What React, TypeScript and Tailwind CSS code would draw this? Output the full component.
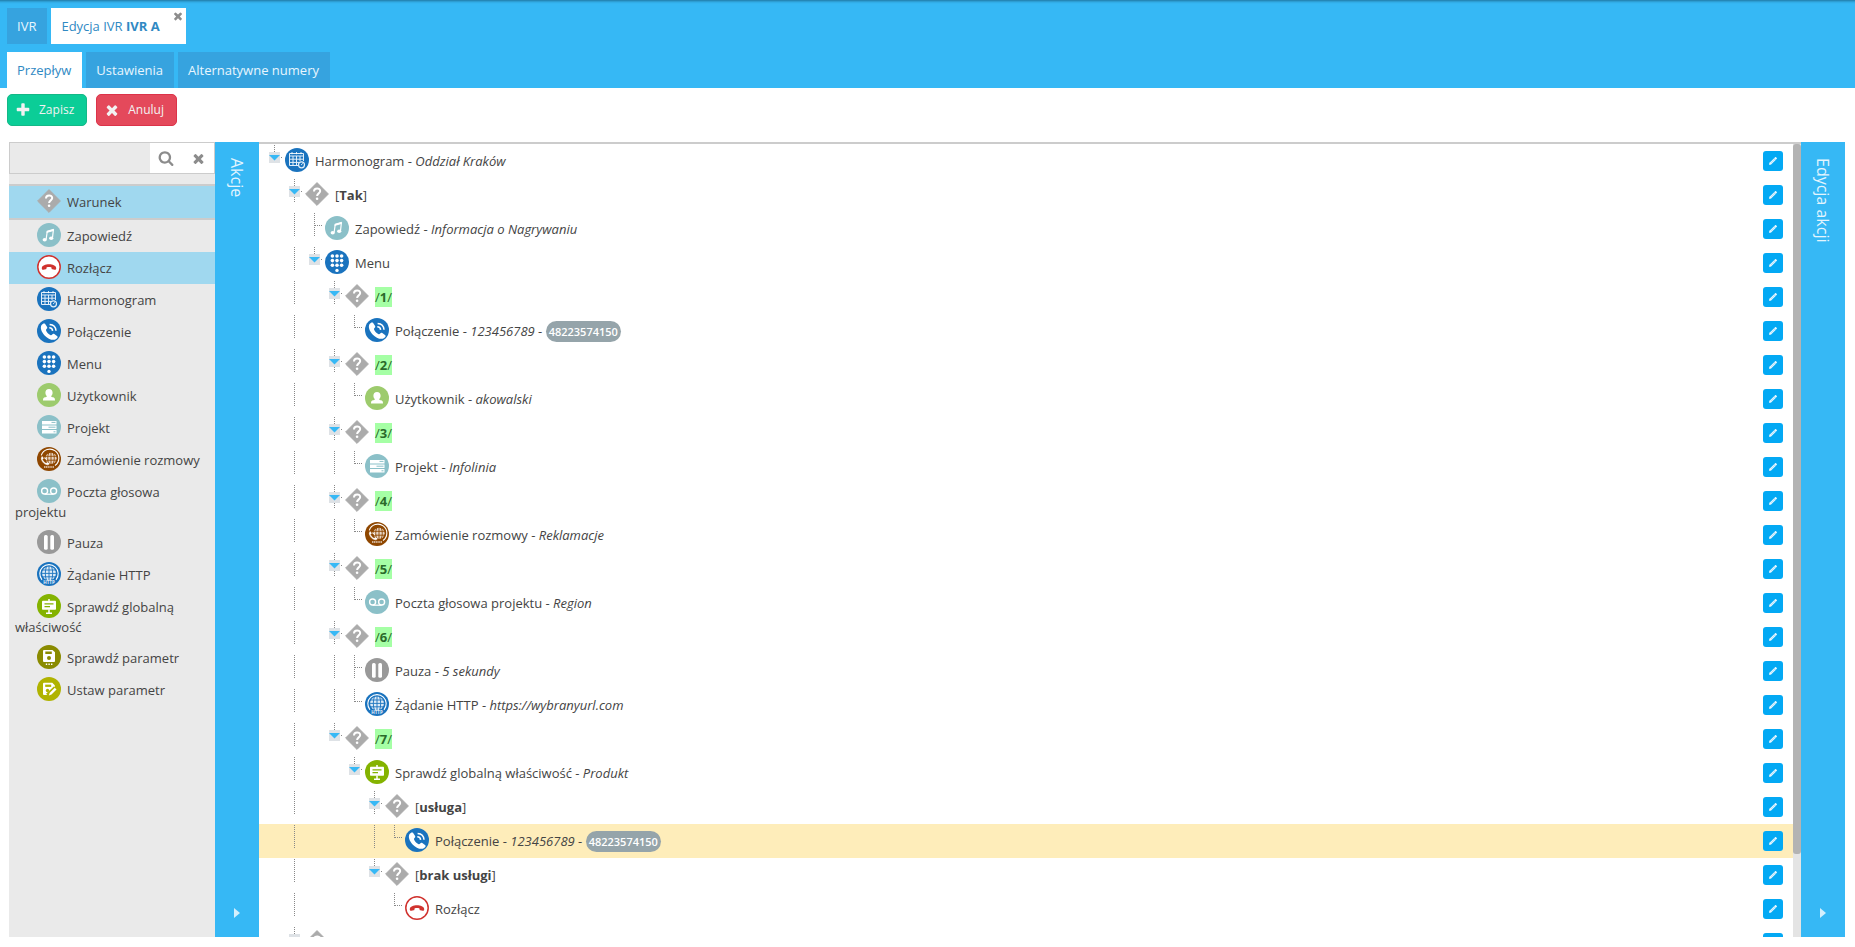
import type { ReactNode } from "react";

type IconName =
  | "condition"
  | "announcement"
  | "hangup"
  | "schedule"
  | "call"
  | "menu"
  | "user"
  | "project"
  | "callback"
  | "voicemail"
  | "pause"
  | "http"
  | "global"
  | "checkParam"
  | "setParam";

const DIAL_COLS = [7.4, 12, 16.6];
const DIAL_ROWS = [6, 10.6, 15.2];

const ICONS: Record<IconName, ReactNode> = {
  condition: (
    <>
      <path d="M12 .6 23.4 12 12 23.4.6 12z" fill="#ababab" stroke="#ababab" strokeLinejoin="round" />
      <path d="M9 9.4c0-4 6.2-3.8 6.2-.4 0 2.4-3.1 2.4-3.1 5" fill="none" stroke="#fff" strokeWidth="2" />
      <circle cx="12.1" cy="16.8" r="1.3" fill="#fff" />
    </>
  ),
  announcement: (
    <>
      <circle cx="12" cy="12" r="12" fill="#8bc0c8" />
      <path d="M9.1 16.5 10.2 8.6l6.2-1.7-.9 7.9" fill="none" stroke="#fff" strokeWidth="1.2" />
      <path d="m9.800 7.800 7-2-.3 2.300-7 2z" fill="#fff" />
      <ellipse cx="7.700" cy="16.700" rx="2.100" ry="1.800" fill="#fff" />
      <ellipse cx="14.200" cy="15.200" rx="2.100" ry="1.800" fill="#fff" />
    </>
  ),
  hangup: (
    <>
      <circle cx="12" cy="12" r="11.2" fill="#fff" stroke="#d0322e" strokeWidth="1.5" />
      <path d="M4.800 13c.5-5 13.900-5 14.400 0 .1 1.500-.5 1.900-1.700 1.700l-2-.4c-1-.2-1-.8-1-1.900-1.600-.6-3.400-.6-5 0 0 1.100 0 1.700-1 1.900l-2 .4c-1.200.2-1.800-.2-1.700-1.700z" fill="#d0322e" />
    </>
  ),
  schedule: (
    <>
      <circle cx="12" cy="12" r="12" fill="#1a73be" />
      <path d="M4.5 5.500h14V8h-14zM4.500 8v9.500H13M18.500 8v5M8 8v9.500M11.500 8v9.500M15 8v5M4.500 11.200h14M4.500 14.400H14" fill="none" stroke="#e3eff9" strokeWidth="1" />
      <path d="M7 4.200v2M11.500 4.200v2M16 4.200v2" stroke="#fff" strokeWidth="1" />
      <circle cx="16.500" cy="16.800" r="3" fill="#1a73be" stroke="#e3eff9" strokeWidth="1.200" />
      <path d="m16.200 16.900 1.500-1.400" stroke="#fff" strokeWidth="1" />
    </>
  ),
  call: (
    <>
      <circle cx="12" cy="12" r="12" fill="#1a73be" />
      <path d="M4.600 6c1-1.400 2.600-2.100 3.400-1.200l2.100 3.200c.5.900-.1 1.600-.8 2.300-.5.600-.3 1.100.1 1.900 1 1.700 2.200 2.900 3.800 3.700.8.400 1.300.4 1.800-.2.700-.8 1.500-1.300 2.300-.7l3 2.200c.9.800 0 2.200-1.500 3.100-2.900 1.500-7.800-.2-11.200-3.900S2.900 8.700 4.600 6z" fill="#fff" />
      <path d="M12.300 8.700c1.800 0 3.200 1.300 3.300 3.200M12.600 5.400c3.600.2 6.200 2.700 6.400 6.400" fill="none" stroke="#fff" strokeWidth="1.500" />
    </>
  ),
  menu: (
    <>
      <circle cx="12" cy="12" r="12" fill="#1a73be" />
      {DIAL_ROWS.map((y) => DIAL_COLS.map((x) => <circle key={`${x}-${y}`} cx={x} cy={y} r="1.800" fill="#fff" />))}
      <circle cx="12" cy="20.400" r="1.700" fill="#fff" />
    </>
  ),
  user: (
    <>
      <circle cx="12" cy="12" r="12" fill="#9dcb6d" />
      <path d="M12 6c2.300 0 3.600 1.600 3.600 3.700 0 1.500-.7 2.800-1.500 3.500.2.700 1.200.9 2.100 1.100 1.400.4 1.800 1.300 1.800 3.200H6c0-1.900.4-2.800 1.800-3.200.9-.2 1.900-.4 2.100-1.100-.8-.7-1.500-2-1.500-3.500C8.400 7.600 9.700 6 12 6z" fill="#fff" />
    </>
  ),
  project: (
    <>
      <circle cx="12" cy="12" r="12" fill="#8bc0c8" />
      <path d="M5 6h14.500v3.400H5zM5 10.500h14.500v3.400H5zM5 15h14.500v3.400H5z" fill="#fff" />
      <path d="M14.500 7.400h4M11.500 12.200h7M16.500 16.800h2" stroke="#8bc0c8" strokeWidth="1" />
    </>
  ),
  callback: (
    <>
      <circle cx="12" cy="12" r="12" fill="#8f4700" />
      <path d="M4.300 8.300A9 9 0 1 1 18 18.500" fill="none" stroke="#fff" strokeWidth="1.100" />
      <circle cx="14" cy="11.300" r="5.600" fill="#e8d6c6" />
      <path d="M14 5.500v11.600M8 9.300h12M8 13.200h12M11.700 5.800c-1.300 3.500-1.300 7.500 0 11M16.300 5.800c1.300 3.500 1.300 7.500 0 11" fill="none" stroke="#8f4700" strokeWidth=".9" />
      <path d="M4.200 10c.7-1 1.700-.8 2 0l.6 1.500-1 1.100c.6 1.500 1.800 2.700 3.300 3.300l1.200-1 1.700.8c.8.600.6 1.600-.4 2.200-1.500.8-4-.3-5.800-2.400-1.800-2-2.400-4.200-1.600-5.500z" fill="#fff" stroke="#8f4700" strokeWidth=".4" />
      <path d="M7.200 10.900c1.300.1 2.200.9 2.400 2.200" fill="none" stroke="#fff" strokeWidth="1" />
      <path d="M7 20h10" stroke="#e8d6c6" strokeWidth="1.700" strokeDasharray="1.300 .5" />
    </>
  ),
  voicemail: (
    <>
      <circle cx="12" cy="12" r="12" fill="#8bc0c8" />
      <circle cx="7.600" cy="12" r="3" fill="none" stroke="#fff" strokeWidth="1.400" />
      <circle cx="16.600" cy="12" r="3" fill="none" stroke="#fff" strokeWidth="1.400" />
      <path d="M7.600 15.200h9" stroke="#fff" strokeWidth="1.300" />
    </>
  ),
  pause: (
    <>
      <circle cx="12" cy="12" r="12" fill="#999" />
      <rect x="7" y="5" width="3.700" height="14.800" rx="1.500" fill="#fff" />
      <rect x="13.300" y="5" width="3.700" height="14.800" rx="1.500" fill="#fff" />
    </>
  ),
  http: (
    <>
      <circle cx="12" cy="12" r="12" fill="#1a73be" />
      <path d="M5 17.800A9.200 9.200 0 1 1 19 17.800" fill="none" stroke="#fff" strokeWidth="1.100" />
      <circle cx="12" cy="11.400" r="6.900" fill="#dceaf6" />
      <path d="M12 4v15M4.500 11.400h15M5 8h14M5 14.800h14M9.500 4.300c-1.600 4.500-1.600 9.700 0 14.200M14.500 4.300c1.600 4.500 1.600 9.700 0 14.200" fill="none" stroke="#1a73be" strokeWidth=".9" />
      <path d="M6 18h12v4H6z" fill="#1a73be" />
      <text x="12" y="22.300" textAnchor="middle" fontSize="4.600" fontWeight="700" fill="#e3eff9">HTTP</text>
    </>
  ),
  global: (
    <>
      <circle cx="12" cy="12" r="12" fill="#84b300" />
      <path d="M12 5v2.500M12 15.500v4M9 19.200h6" stroke="#fff" strokeWidth="1.500" />
      <rect x="5" y="6.800" width="14" height="8.900" rx=".8" fill="#fff" />
      <path d="M7.500 9.800h9M7.500 12.600h5.500" stroke="#84b300" strokeWidth="1.200" />
    </>
  ),
  checkParam: (
    <>
      <circle cx="12" cy="12" r="12" fill="#8a8b00" />
      <path d="M7 5h8.500L18 7.300V16q0 1-1 1H7q-1 0-1-1V6q0-1 1-1z" fill="#fff" />
      <path d="M8.300 6.500h6.500V9H8.300z" fill="#8a8b00" />
      <circle cx="12" cy="13" r="2" fill="#8a8b00" />
      <path d="M8.800 19.300h1.400M11.400 19.300h1.400M14 19.300h1.400" stroke="#fff" strokeWidth="1.400" />
    </>
  ),
  setParam: (
    <>
      <circle cx="12" cy="12" r="12" fill="#b0b300" />
      <path d="M7 5.800h8.300l2.700 2.600v2.300L11.500 18H7q-1 0-1-1V6.800q0-1 1-1z" fill="#fff" />
      <path d="M8.200 7.600h6v2.300h-6z" fill="#b0b300" />
      <circle cx="10.500" cy="13.500" r="1.700" fill="#b0b300" />
      <path d="m10.800 18.500 8-7.500" fill="none" stroke="#b0b300" strokeWidth="5" />
      <path d="m11.800 18.500 1-2.700 5-5 1.700 1.700-5 5z" fill="#fff" />
    </>
  ),
};

const ActionIcon = ({ name, className = "" }: { name: IconName; className?: string }) => (
  <svg viewBox="0 0 24 24" className={`h-6 w-6 shrink-0 ${className}`} aria-hidden="true">
    {ICONS[name]}
  </svg>
);

const GLYPHS = {
  times:
    "M1490 1322q0 40-28 68l-136 136q-28 28-68 28t-68-28l-294-294-294 294q-28 28-68 28t-68-28l-136-136q-28-28-28-68t28-68l294-294-294-294q-28-28-28-68t28-68l136-136q28-28 68-28t68 28l294 294 294-294q28-28 68-28t68 28l136 136q28 28 28 68t-28 68l-294 294 294 294q28 28 28 68z",
  plus:
    "M1600 736v192q0 40-28 68t-68 28h-416v416q0 40-28 68t-68 28h-192q-40 0-68-28t-28-68v-416h-416q-40 0-68-28t-28-68v-192q0-40 28-68t68-28h416v-416q0-40 28-68t68-28h192q40 0 68 28t28 68v416h416q40 0 68 28t28 68z",
  search:
    "M1216 832q0-185-131.5-316.5t-316.5-131.5-316.5 131.5-131.5 316.5 131.5 316.5 316.5 131.5 316.5-131.5 131.5-316.5zm512 832q0 52-38 90t-90 38q-54 0-90-38l-343-342q-179 124-399 124-143 0-273.5-55.5t-225-150-150-225-55.5-273.5 55.5-273.5 150-225 225-150 273.5-55.5 273.5 55.5 225 150 150 225 55.500 273.500q0 220-124 399l343 343q37 37 37 90z",
};

const Glyph = ({ name, className }: { name: keyof typeof GLYPHS; className: string }) => (
  <svg viewBox="0 0 1792 1792" className={className} fill="currentColor" aria-hidden="true">
    <path d={GLYPHS[name]} />
  </svg>
);

const Pencil = () => (
  <svg viewBox="0 0 10 10" className="h-2.5 w-2.5" aria-hidden="true">
    <path d="M1.200 8.800 1.700 6.600l4.600-4.600 1.700 1.700-4.600 4.600z" fill="#b9e4fb" />
    <path d="M1.200 8.800 1.700 6.600 3.400 8.300zM6.400 1.900l.7-.7q.6-.4 1.200.2l.3.300q.6.600.1 1.200l-.7.700z" fill="#fff" />
    <path d="m2 7 4.600-4.600M3 8l4.600-4.600" stroke="#fff" strokeWidth=".5" />
  </svg>
);

const ACTIONS: { icon: IconName; label: string }[] = [
  { icon: "condition", label: "Warunek" },
  { icon: "announcement", label: "Zapowiedź" },
  { icon: "hangup", label: "Rozłącz" },
  { icon: "schedule", label: "Harmonogram" },
  { icon: "call", label: "Połączenie" },
  { icon: "menu", label: "Menu" },
  { icon: "user", label: "Użytkownik" },
  { icon: "project", label: "Projekt" },
  { icon: "callback", label: "Zamówienie rozmowy" },
  { icon: "voicemail", label: "Poczta głosowa projektu" },
  { icon: "pause", label: "Pauza" },
  { icon: "http", label: "Żądanie HTTP" },
  { icon: "global", label: "Sprawdź globalną właściwość" },
  { icon: "checkParam", label: "Sprawdź parametr" },
  { icon: "setParam", label: "Ustaw parametr" },
];

const actionStyle = (label: string) => {
  if (label === "Warunek") return "bg-[#a0d8ef] border-y-2 border-[#ccc]";
  if (label === "Rozłącz") return "bg-[#a0d8ef]";
  return "";
};

// guides: one character per column. " " empty, "|" line passing by,
// "T" branch that goes on below, "L" last branch
type Node = {
  guides: string;
  icon: IconName;
  open?: boolean;
  text?: string;
  detail?: string;
  badge?: string;
  digit?: string;
  branch?: string;
  selected?: boolean;
};

const NODES: Node[] = [
  { guides: "L", open: true, icon: "schedule", text: "Harmonogram", detail: "Oddział Kraków" },
  { guides: " T", open: true, icon: "condition", branch: "Tak" },
  { guides: " |T", icon: "announcement", text: "Zapowiedź", detail: "Informacja o Nagrywaniu" },
  { guides: " |L", open: true, icon: "menu", text: "Menu" },
  { guides: " | T", open: true, icon: "condition", digit: "1" },
  { guides: " | |L", icon: "call", text: "Połączenie", detail: "123456789", badge: "48223574150" },
  { guides: " | T", open: true, icon: "condition", digit: "2" },
  { guides: " | |L", icon: "user", text: "Użytkownik", detail: "akowalski" },
  { guides: " | T", open: true, icon: "condition", digit: "3" },
  { guides: " | |L", icon: "project", text: "Projekt", detail: "Infolinia" },
  { guides: " | T", open: true, icon: "condition", digit: "4" },
  { guides: " | |L", icon: "callback", text: "Zamówienie rozmowy", detail: "Reklamacje" },
  { guides: " | T", open: true, icon: "condition", digit: "5" },
  { guides: " | |L", icon: "voicemail", text: "Poczta głosowa projektu", detail: "Region" },
  { guides: " | T", open: true, icon: "condition", digit: "6" },
  { guides: " | |T", icon: "pause", text: "Pauza", detail: "5 sekundy" },
  { guides: " | |L", icon: "http", text: "Żądanie HTTP", detail: "https://wybranyurl.com" },
  { guides: " | L", open: true, icon: "condition", digit: "7" },
  { guides: " |  L", open: true, icon: "global", text: "Sprawdź globalną właściwość", detail: "Produkt" },
  { guides: " |   T", open: true, icon: "condition", branch: "usługa" },
  { guides: " |   |L", icon: "call", text: "Połączenie", detail: "123456789", badge: "48223574150", selected: true },
  { guides: " |   L", open: true, icon: "condition", branch: "brak usługi" },
  { guides: " |    L", icon: "hangup", text: "Rozłącz" },
  { guides: " L", open: true, icon: "condition" },
];

const Guide = ({ kind, open }: { kind: string; open: boolean }) => (
  <svg viewBox="0 0 20 34" className="h-[34px] w-5 shrink-0" shapeRendering="crispEdges" aria-hidden="true">
    {kind !== " " && (
      <path d={kind === "L" ? "M9.5 1v13" : "M9.5 1v23"} fill="none" stroke="#888" strokeDasharray="1 1" />
    )}
    {(kind === "T" || kind === "L") && <path d="M10 13.5h8" fill="none" stroke="#888" strokeDasharray="1 1" />}
    {open && (
      <>
        <path d="M4 8h11v11H4z" fill="#dee2e6" />
        <path d="M4 11h11l-5.5 5.5z" fill="#36b8f5" shapeRendering="auto" />
      </>
    )}
  </svg>
);

const NodeLabel = ({ node }: { node: Node }) => (
  <span className="ml-1.5 flex h-5 items-center whitespace-pre leading-5">
    {node.branch && (
      <span>
        [<b>{node.branch}</b>]
      </span>
    )}
    {node.digit && (
      <span className="bg-[#a5ffa5] text-[#2a6a2a]">
        /<b>{node.digit}</b>/
      </span>
    )}
    {node.text}
    {node.detail && (
      <>
        {" - "}
        <i>{node.detail}</i>
      </>
    )}
    {node.badge && (
      <>
        {" - "}
        <span className="h-[21px] rounded-full bg-[#95a4aa] px-[3px] text-[11px] font-semibold leading-[21px] text-white">
          {node.badge}
        </span>
      </>
    )}
  </span>
);

const TreeRow = ({ node }: { node: Node }) => {
  const last = node.guides.length - 1;
  return (
    <li className={`flex h-[34px] shrink-0 items-start pl-1.5 pr-2.5 ${node.selected ? "bg-[#feedba]" : ""}`}>
      {node.guides.split("").map((kind, i) => (
        <Guide key={i} kind={kind} open={i === last && !!node.open} />
      ))}
      <ActionIcon name={node.icon} className="mt-1" />
      <span className="mt-[7px] flex-1">
        <NodeLabel node={node} />
      </span>
      <button
        type="button"
        aria-label="Edytuj"
        className="mt-[7px] flex h-5 w-5 items-center justify-center rounded-[3px] bg-[#03a9f4]"
      >
        <Pencil />
      </button>
    </li>
  );
};

const SidePanel = ({ title }: { title: string }) => (
  <button
    type="button"
    className="flex w-11 shrink-0 flex-col items-center justify-between bg-[#36b8f5] pt-4 pb-[19px] text-[#e4f5fe]"
  >
    <span className="text-base leading-5 [writing-mode:vertical-rl]">{title}</span>
    <svg viewBox="0 0 6 10" className="h-2.5 w-1.5" fill="#d3effd" aria-hidden="true">
      <path d="M0 0l6 5-6 5z" />
    </svg>
  </button>
);

export default function App() {
  return (
    <div className="flex h-screen flex-col bg-white pb-2.5 font-['Open_Sans','Noto_Sans',sans-serif] text-[13px] text-[#444]">
      <header className="bg-[#36b8f5] px-[7px] pt-2 shadow-[inset_0_4px_3px_-3px_#1d6d94]">
        <nav className="mb-2 flex h-9 gap-1">
          <a href="#ivr" className="flex items-center bg-[#36a3df] pt-0.5 pr-[11px] pl-2.5 text-[#e8f6fe]">
            IVR
          </a>
          <div className="relative flex bg-white text-[#3089c3]">
            <a href="#edit" className="flex items-center whitespace-pre pt-0.5 pr-[26px] pl-2.5">
              Edycja IVR <b>IVR A</b>
            </a>
            <button type="button" aria-label="Zamknij" className="absolute top-0.5 right-0.5 text-[#8c8c8c]">
              <Glyph name="times" className="h-3 w-3" />
            </button>
          </div>
        </nav>
        <nav className="flex h-9 gap-1">
          <a href="#flow" className="flex items-center bg-white pt-0.5 pr-[11px] pl-2.5 text-[#3089c3]">
            Przepływ
          </a>
          <a href="#settings" className="flex items-center bg-[#36a3df] pt-0.5 pr-[11px] pl-2.5 text-[#e8f6fe]">
            Ustawienia
          </a>
          <a href="#numbers" className="flex items-center bg-[#36a3df] pt-0.5 pr-[11px] pl-2.5 text-[#e8f6fe]">
            Alternatywne numery
          </a>
        </nav>
      </header>

      <div className="flex gap-[9px] px-[7px] pt-1.5 pb-4 text-xs text-[#f2f2f2]">
        <button
          type="button"
          className="flex h-8 items-center gap-2 rounded-[5px] border border-[#14b887] bg-[#0bcd97] pr-3 pl-[7px]"
        >
          <Glyph name="plus" className="h-4 w-4" />
          Zapisz
        </button>
        <button
          type="button"
          className="flex h-8 items-center gap-2 rounded-[5px] border border-[#dc3349] bg-[#e4495b] pr-3 pl-[7px]"
        >
          <Glyph name="times" className="h-4 w-4" />
          Anuluj
        </button>
      </div>

      <main className="flex min-h-0 flex-1 pr-2.5 pl-[9px]">
        <aside className="w-[206px] shrink-0 overflow-hidden bg-[#eaeaea]">
          <form className="mb-2.5 flex h-8 border border-[#ccc]">
            <input type="text" aria-label="Szukaj" className="min-w-0 flex-1 px-2 outline-none" />
            <button type="button" aria-label="Szukaj" className="flex w-8 items-center justify-center bg-white text-[#8c8c8c]">
              <Glyph name="search" className="h-4 w-4" />
            </button>
            <button type="button" aria-label="Wyczyść" className="flex w-8 items-center justify-center bg-white text-[#8c8c8c]">
              <Glyph name="times" className="h-[15px] w-[15px]" />
            </button>
          </form>
          <ul>
            {ACTIONS.map((action) => (
              <li key={action.label} className={`px-1.5 pt-[3px] pb-[5px] leading-[19px] ${actionStyle(action.label)}`}>
                <ActionIcon name={action.icon} className="mr-1.5 ml-[22px] inline-block align-[-6px]" />
                {action.label}
              </li>
            ))}
          </ul>
        </aside>
        <SidePanel title="Akcje" />

        <section className="flex min-w-0 flex-1 border-t-2 border-[#ccc]">
          <ul className="flex flex-1 flex-col overflow-hidden">
            {NODES.map((node, i) => (
              <TreeRow key={i} node={node} />
            ))}
          </ul>
          <div className="w-2 bg-[#e4e4e4]">
            <div className="h-[89.5%] rounded-[3px] bg-[#b3b3b3]" />
          </div>
        </section>
        <SidePanel title="Edycja akcji" />
      </main>
    </div>
  );
}
